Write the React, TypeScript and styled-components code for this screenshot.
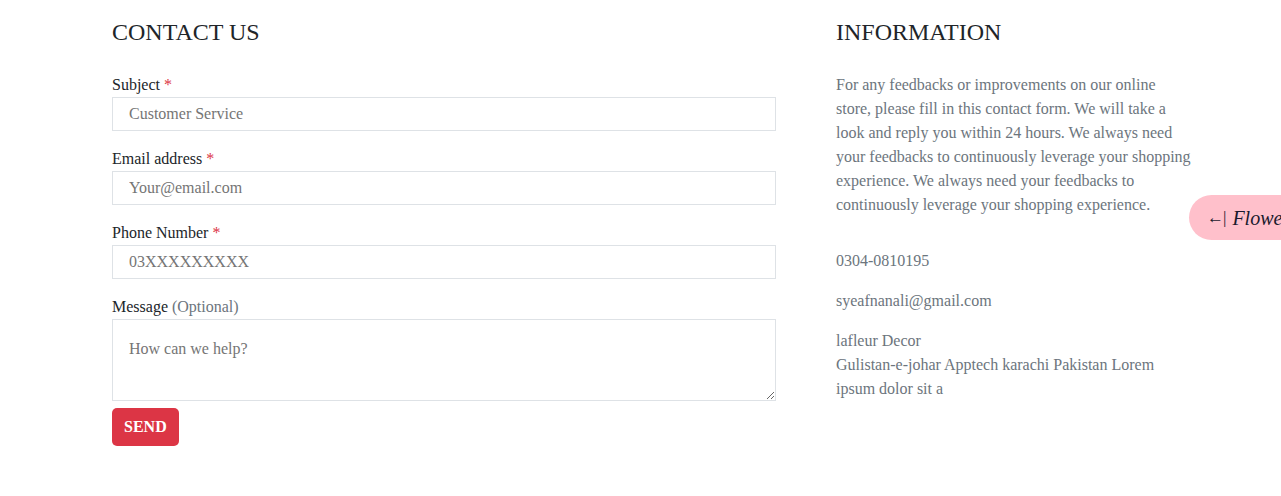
import React from "react";
import styled, { createGlobalStyle } from "styled-components";

const Global = createGlobalStyle`
  html, body { margin: 0; padding: 0; background: #fff; overflow-x: hidden; }
  body { font-family: "Liberation Serif", "Times New Roman", serif; font-size: 16px; line-height: 1.5; color: #212529; }
  * { box-sizing: border-box; }
`;

const Page = styled.div`
  position: relative;
  width: 1281px;
  height: 496px;
  overflow: hidden;
`;

const Layout = styled.div`
  display: grid;
  grid-template-columns: 664px 356px;
  column-gap: 60px;
  padding: 16px 0 0 112px;
`;

const Column = styled.section`
  display: flex;
  flex-direction: column;
`;

const Heading = styled.h2`
  margin: 0 0 25px;
  font-size: 24px;
  font-weight: 400;
  line-height: 32px;
  color: #212529;
`;

const Field = styled.div`
  display: flex;
  flex-direction: column;
  margin-bottom: 16px;
`;

const Label = styled.label`
  font-size: 16px;
  line-height: 24px;
  color: #212529;
`;

const Star = styled.span`
  color: #dc3545;
`;

const Muted = styled.span`
  color: #6c757d;
`;

const Input = styled.input`
  height: 34px;
  width: 100%;
  border: 1px solid #dee2e6;
  border-radius: 0;
  padding: 0 16px;
  font-family: inherit;
  font-size: 16px;
  color: #212529;
  outline: none;
  &::placeholder { color: #757575; }
`;

const TextArea = styled.textarea`
  height: 82px;
  width: 100%;
  border: 1px solid #dee2e6;
  border-radius: 0;
  padding: 17px 16px;
  font-family: inherit;
  font-size: 16px;
  line-height: 24px;
  color: #212529;
  outline: none;
  resize: vertical;
  display: block;
  &::placeholder { color: #757575; }
`;

const MessageField = styled(Field)`
  margin-bottom: 7px;
`;

const SendButton = styled.button`
  align-self: flex-start;
  height: 38px;
  padding: 0 12px;
  border: none;
  border-radius: 5px;
  background: #dc3545;
  color: #fff;
  font-family: inherit;
  font-size: 16px;
  font-weight: 700;
  cursor: pointer;
`;

const InfoText = styled.p<{ gap?: number }>`
  margin: 0 0 ${(p) => p.gap ?? 16}px;
  font-size: 16px;
  line-height: 24px;
  color: #6c757d;
`;

const Pill = styled.div`
  position: absolute;
  left: 1189px;
  top: 195px;
  height: 45px;
  width: 160px;
  display: flex;
  align-items: center;
  gap: 7px;
  padding-left: 18px;
  background: #ffc0cb;
  border-radius: 23px 0 0 23px;
  color: #1a1a2e;
  white-space: nowrap;
`;

const Arrow = styled.span`
  font-size: 17px;
  font-style: normal;
  letter-spacing: -1px;
  line-height: 1;
`;

const PillText = styled.span`
  font-size: 20px;
  font-style: italic;
`;

export default function App() {
  return (
    <Page>
      <Global />
      <Layout>
        <Column>
          <Heading>CONTACT US</Heading>
          <Field>
            <Label>
              Subject <Star>*</Star>
            </Label>
            <Input placeholder="Customer Service" />
          </Field>
          <Field>
            <Label>
              Email address <Star>*</Star>
            </Label>
            <Input placeholder="Your@email.com" />
          </Field>
          <Field>
            <Label>
              Phone Number <Star>*</Star>
            </Label>
            <Input placeholder="03XXXXXXXXX" />
          </Field>
          <MessageField>
            <Label>
              Message <Muted>(Optional)</Muted>
            </Label>
            <TextArea placeholder="How can we help?" />
          </MessageField>
          <SendButton>SEND</SendButton>
        </Column>
        <Column>
          <Heading>INFORMATION</Heading>
          <InfoText gap={32}>
            For any feedbacks or improvements on our online store, please fill in this contact form. We will take a
            look and reply you within 24 hours. We always need your feedbacks to continuously leverage your shopping
            experience. We always need your feedbacks to continuously leverage your shopping experience.
          </InfoText>
          <InfoText>0304-0810195</InfoText>
          <InfoText>syeafnanali@gmail.com</InfoText>
          <InfoText>
            lafleur Decor
            <br />
            Gulistan-e-johar Apptech karachi Pakistan Lorem ipsum dolor sit a
          </InfoText>
        </Column>
      </Layout>
      <Pill>
        <Arrow>←|</Arrow>
        <PillText>Flowers</PillText>
      </Pill>
    </Page>
  );
}
